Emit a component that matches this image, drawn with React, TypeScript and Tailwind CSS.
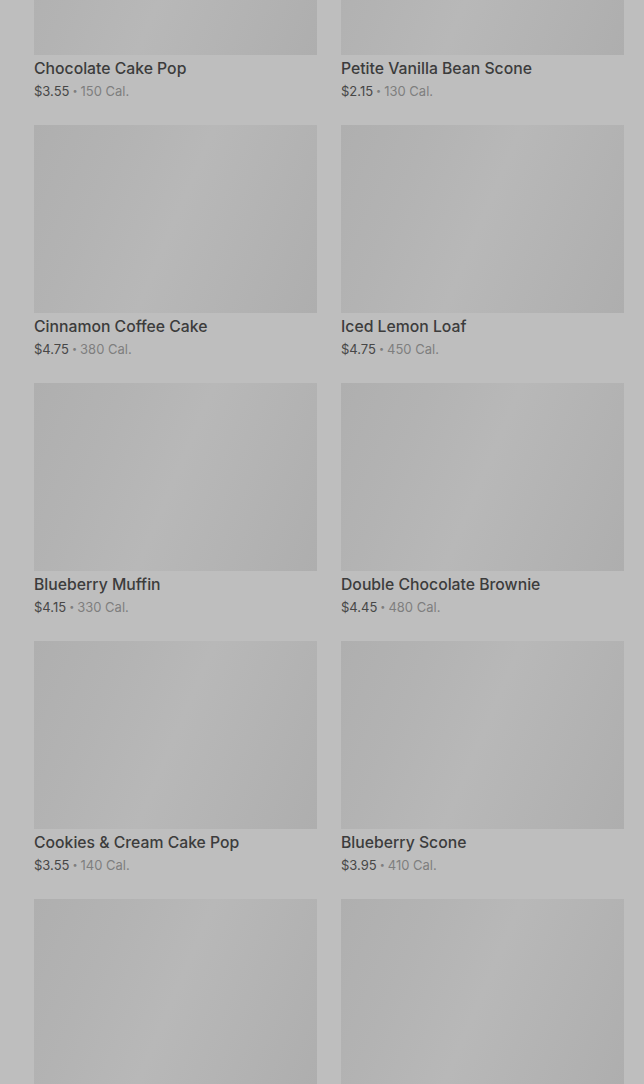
import React from "react";

const items = [
  { name: "Chocolate Cake Pop", price: "$3.55", cal: "150 Cal." },
  { name: "Petite Vanilla Bean Scone", price: "$2.15", cal: "130 Cal." },
  { name: "Cinnamon Coffee Cake", price: "$4.75", cal: "380 Cal." },
  { name: "Iced Lemon Loaf", price: "$4.75", cal: "450 Cal." },
  { name: "Blueberry Muffin", price: "$4.15", cal: "330 Cal." },
  { name: "Double Chocolate Brownie", price: "$4.45", cal: "480 Cal." },
  { name: "Cookies & Cream Cake Pop", price: "$3.55", cal: "140 Cal." },
  { name: "Blueberry Scone", price: "$3.95", cal: "410 Cal." },
  { name: "", price: "", cal: "" },
  { name: "", price: "", cal: "" },
];

export default function App() {
  return (
    <div
      className="w-[644px] h-[1084px] overflow-hidden bg-[#bebebe]"
      style={{ fontFamily: "Inter, Roboto, 'Liberation Sans', sans-serif" }}
    >
      <div className="-mt-[133px] pl-[34px] pr-[20px] grid grid-cols-2 gap-x-[24px] gap-y-[25px]">
        {items.map((it, i) => (
          <div key={i} className="flex flex-col">
            <div className="h-[188px] w-full bg-[linear-gradient(113deg,#afafaf_0%,#b3b3b3_25%,#b8b8b8_50%,#b3b3b3_75%,#aeaeae_100%)]" />
            {it.name ? (
              <>
                <div className="mt-[4px] text-[15.75px] leading-[20px] font-medium text-[#3c3c3c]">
                  {it.name}
                </div>
                <div className="mt-[3px] text-[13px] leading-[18px] text-[#474747] flex items-center">
                  <span>{it.price}</span>
                  <span className="mx-[3px] text-[9px] leading-[18px] text-[#7e7e7e]">•</span>
                  <span className="text-[#7e7e7e]">{it.cal}</span>
                </div>
              </>
            ) : null}
          </div>
        ))}
      </div>
    </div>
  );
}
